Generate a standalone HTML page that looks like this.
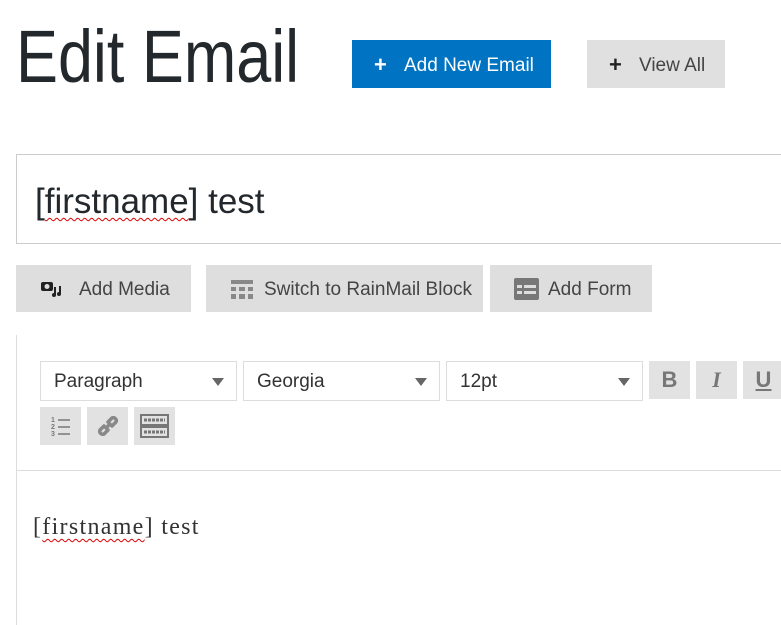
<!DOCTYPE html>
<html><head><style>
body{margin:0;width:781px;height:625px;overflow:hidden;background:#fff;font-family:"Liberation Sans",sans-serif;position:relative;color:#23282d}
.a{position:absolute}
.btn{position:absolute;background:#dedede;color:#444;font-size:19px;line-height:49px;height:47px}
.sel{position:absolute;top:361px;border:1px solid #ddd;background:#fff;font-size:19px;line-height:40px;color:#333;box-sizing:border-box;height:40px;padding-left:13px}
.sel:after{content:"";position:absolute;right:12px;top:16px;border-left:6px solid transparent;border-right:6px solid transparent;border-top:8px solid #666}
.tb{position:absolute;width:41px;height:38px;background:#e2e2e2;color:#777;font-size:22px;text-align:center;line-height:38px;font-weight:bold}
.sq{text-decoration:underline wavy #d00;text-decoration-thickness:1px;text-underline-offset:4px}
</style></head><body>
<div class="a" style="left:16px;top:14px;font-size:74px;color:#23282d;transform:scaleX(0.85);transform-origin:0 0;white-space:nowrap">Edit Email</div>
<div class="a" style="left:352px;top:40px;width:199px;height:48px;background:#0073c2;color:#fff;font-size:19px;line-height:52px"><span style="position:absolute;left:22px;font-weight:bold;font-size:22px;line-height:50px">+</span><span style="position:absolute;left:52px">Add New Email</span></div>
<div class="a" style="left:587px;top:40px;width:138px;height:48px;background:#e0e0e0;color:#444;font-size:19px;line-height:52px"><span style="position:absolute;left:22px;font-weight:bold;font-size:22px;color:#222;line-height:50px">+</span><span style="position:absolute;left:52px">View All</span></div>
<div class="a" style="left:16px;top:154px;width:780px;height:90px;border:1px solid #ccc;box-sizing:border-box"></div>
<div class="a" style="left:35px;top:182px;font-size:35px;color:#23282d">[<span class="sq">firstname</span>] test</div>
<div class="btn" style="left:16px;top:265px;width:175px"><svg class="a" style="left:24px;top:15px" width="22" height="18" viewBox="0 0 22 18"><rect x="1" y="2" width="12" height="9" rx="2" fill="#222"/><circle cx="7" cy="6.5" r="2.5" fill="#dedede"/><path d="M15 7v8M20 6v8" stroke="#222" stroke-width="2"/><circle cx="14" cy="15" r="2" fill="#222"/><circle cx="19" cy="14" r="2" fill="#222"/></svg><span style="position:absolute;left:63px">Add Media</span></div>
<div class="btn" style="left:206px;top:265px;width:277px"><svg class="a" style="left:25px;top:15px" width="22" height="20"><rect x="0" y="0" width="22" height="4" fill="#888"/><rect x="0" y="7" width="5" height="4" fill="#888"/><rect x="8" y="7" width="6" height="4" fill="#888"/><rect x="17" y="7" width="5" height="4" fill="#888"/><rect x="0" y="14" width="5" height="5" fill="#888"/><rect x="8" y="14" width="6" height="5" fill="#888"/><rect x="17" y="14" width="5" height="5" fill="#888"/></svg><span style="position:absolute;left:58px">Switch to RainMail Block</span></div>
<div class="btn" style="left:490px;top:265px;width:162px"><svg class="a" style="left:24px;top:13px" width="25" height="22"><rect x="0" y="0" width="25" height="22" rx="2" fill="#777"/><rect x="3" y="7" width="5" height="3" fill="#ddd"/><rect x="10" y="7" width="12" height="3" fill="#ddd"/><rect x="3" y="13" width="5" height="3" fill="#ddd"/><rect x="10" y="13" width="12" height="3" fill="#ddd"/></svg><span style="position:absolute;left:58px">Add Form</span></div>
<div class="a" style="left:16px;top:335px;width:1px;height:290px;background:#ddd"></div>
<div class="sel" style="left:40px;width:197px">Paragraph</div>
<div class="sel" style="left:243px;width:197px">Georgia</div>
<div class="sel" style="left:446px;width:197px">12pt</div>
<div class="tb" style="left:649px;top:361px">B</div>
<div class="tb" style="left:696px;top:361px;font-style:italic;font-family:'Liberation Serif',serif">I</div>
<div class="tb" style="left:743px;top:361px;text-decoration:underline">U</div>
<div class="tb" style="left:40px;top:407px"><svg class="a" style="left:11px;top:9px" width="20" height="21"><text x="0" y="6" font-size="7" fill="#777" font-family="Liberation Sans">1</text><text x="0" y="13" font-size="7" fill="#777" font-family="Liberation Sans">2</text><text x="0" y="20" font-size="7" fill="#777" font-family="Liberation Sans">3</text><path d="M7 4h12M7 11h12M7 18h12" stroke="#777" stroke-width="1.5"/></svg></div>
<div class="tb" style="left:87px;top:407px"><svg class="a" style="left:8px;top:6px" width="26" height="26" viewBox="0 0 26 26"><path d="M11 15l4-4M9 13l-4 4a3 3 0 0 0 4 4l4-4M17 13l4-4a3 3 0 0 0-4-4l-4 4" stroke="#888" stroke-width="3.5" fill="none" stroke-linecap="round"/></svg></div>
<div class="tb" style="left:134px;top:407px"><svg class="a" style="left:6px;top:7px" width="29" height="25"><rect x="1" y="1" width="27" height="10" fill="none" stroke="#777" stroke-width="2"/><rect x="1" y="13" width="27" height="10" fill="none" stroke="#777" stroke-width="2"/><path d="M4 6h21M4 18h21" stroke="#777" stroke-width="3" stroke-dasharray="3 1"/></svg></div>
<div class="a" style="left:16px;top:470px;width:765px;height:1px;background:#ddd"></div>
<div class="a" style="left:33px;top:514px;font-family:'Liberation Serif',Georgia,serif;font-size:24px;letter-spacing:1.3px;color:#333">[<span class="sq">firstname</span>] test</div>
</body></html>
